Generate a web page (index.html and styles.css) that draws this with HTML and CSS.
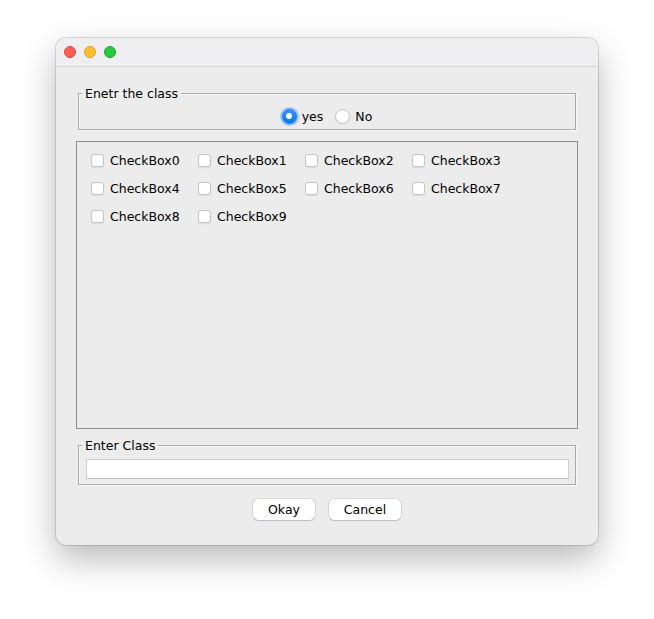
FILE: index.html
```html
<!DOCTYPE html>
<html>
<head>
<meta charset="utf-8">
<link rel="stylesheet" href="styles.css">
</head>
<body>
<div class="window">
  <div class="titlebar">
    <span class="light red"></span>
    <span class="light yellow"></span>
    <span class="light green"></span>
  </div>
  <div class="content">
    <fieldset class="group group-class">
      <legend>Enetr the class</legend>
      <div class="radios">
        <label class="radio"><span class="rbtn on"></span>yes</label>
        <label class="radio"><span class="rbtn"></span>No</label>
      </div>
    </fieldset>
    <div class="panel">
      <label class="check"><span class="cbox"></span>CheckBox0</label>
      <label class="check"><span class="cbox"></span>CheckBox1</label>
      <label class="check"><span class="cbox"></span>CheckBox2</label>
      <label class="check"><span class="cbox"></span>CheckBox3</label>
      <label class="check"><span class="cbox"></span>CheckBox4</label>
      <label class="check"><span class="cbox"></span>CheckBox5</label>
      <label class="check"><span class="cbox"></span>CheckBox6</label>
      <label class="check"><span class="cbox"></span>CheckBox7</label>
      <label class="check"><span class="cbox"></span>CheckBox8</label>
      <label class="check"><span class="cbox"></span>CheckBox9</label>
    </div>
    <fieldset class="group group-enter">
      <legend>Enter Class</legend>
      <div class="field"></div>
    </fieldset>
    <div class="buttons">
      <button class="btn btn-ok">Okay</button>
      <button class="btn btn-cancel">Cancel</button>
    </div>
  </div>
</div>
</body>
</html>
```
FILE: styles.css
```css
html, body {
  margin: 0;
  padding: 0;
  background: #ffffff;
}
body {
  font-family: "DejaVu Sans", "Noto Sans", sans-serif;
  font-size: 12.5px;
  color: #000000;
  padding: 38px 0 0 56px;
  height: 619px;
  box-sizing: border-box;
}
.window {
  width: 542px;
  height: 507px;
  background: #ececec;
  border-radius: 10px;
  box-shadow: 0 14px 34px rgba(0,0,0,0.28), 0 0 0 1px rgba(0,0,0,0.13);
  overflow: hidden;
  display: flex;
  flex-direction: column;
}
.titlebar {
  height: 28px;
  background: #efeef1;
  border-bottom: 1px solid #d5d5d5;
  display: flex;
  align-items: center;
  padding-left: 8px;
  gap: 8px;
  flex: none;
}
.light {
  width: 12px;
  height: 12px;
  border-radius: 50%;
  box-sizing: border-box;
}
.red { background: #fe5f57; border: 0.5px solid #e14942; }
.yellow { background: #febc2e; border: 0.5px solid #dea123; }
.green { background: #28c840; border: 0.5px solid #1aab29; }

.content {
  padding: 19px 20px 0 20px;
  display: flex;
  flex-direction: column;
}
.group {
  margin: 0 2px;
  padding: 0;
  border: 1px solid #a9a9a9;
  box-shadow: inset 1px 1px 0 #fafafa, 1px 1px 0 #fafafa;
  min-width: 0;
}
.group legend {
  margin-left: 3px;
  padding: 0 3px;
  line-height: 15px;
  color: #000;
}
.radios {
  display: flex;
  justify-content: center;
  align-items: center;
  gap: 12px;
  height: 18px;
  padding: 6px 0 4px;
}
.radio {
  display: flex;
  align-items: center;
  gap: 5px;
}
.rbtn {
  width: 15px;
  height: 15px;
  border-radius: 50%;
  box-sizing: border-box;
  background: #ffffff;
  border: 1px solid #c4c4c4;
  box-shadow: 0 0.5px 1px rgba(0,0,0,0.08);
  position: relative;
}
.rbtn.on {
  background: linear-gradient(#3a95ff, #0a74f0);
  border: 1px solid #0b6fe6;
  box-shadow: 0 0 0 2px rgba(90,160,255,0.55);
}
.rbtn.on::after {
  content: "";
  position: absolute;
  left: 3.5px;
  top: 3.5px;
  width: 6px;
  height: 6px;
  border-radius: 50%;
  background: #ffffff;
}
.panel {
  margin-top: 11px;
  height: 282px;
  border: 1px solid #8e8e8e;
  padding: 4px 0 0 14px;
  display: flex;
  flex-wrap: wrap;
  align-content: flex-start;
}
.check {
  width: 107px;
  height: 28px;
  display: flex;
  align-items: center;
}
.cbox {
  width: 13px;
  height: 13px;
  box-sizing: border-box;
  background: #ffffff;
  border: 1px solid #c6c6c6;
  border-radius: 3px;
  box-shadow: 0 0.5px 1px rgba(0,0,0,0.08);
  margin-right: 6px;
}
.group-enter {
  margin-top: 9px;
}
.field {
  margin: 6px 6px 5px 7px;
  height: 20px;
  box-sizing: border-box;
  background: #ffffff;
  border: 1px solid #d0d0d0;
  border-bottom-color: #bdbdbd;
}
.buttons {
  display: flex;
  justify-content: center;
  gap: 14px;
  margin-top: 14px;
}
.btn {
  font-family: "DejaVu Sans", "Noto Sans", sans-serif;
  font-size: 12.5px;
  color: #000;
  height: 21px;
  background: #ffffff;
  border: none;
  border-radius: 5px;
  box-shadow: 0 0 0 0.5px rgba(0,0,0,0.18), 0 1px 1px rgba(0,0,0,0.12);
  padding: 0;
}
.btn-ok { width: 62px; }
.btn-cancel { width: 72px; }
```
